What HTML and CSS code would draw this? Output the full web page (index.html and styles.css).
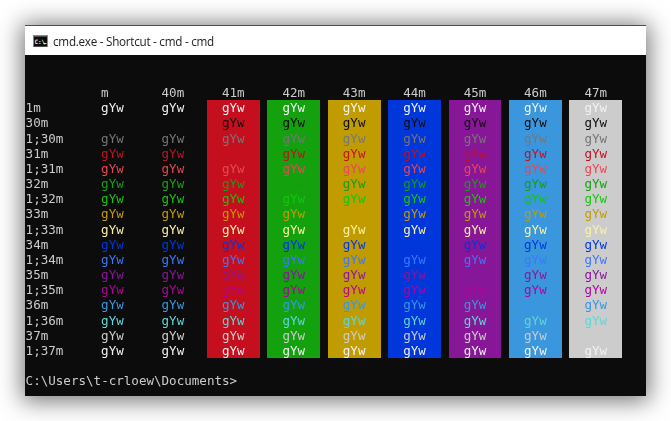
FILE: index.html
```html
<!DOCTYPE html>
<html lang="en">
<head>
<meta charset="utf-8">
<title>cmd.exe - Shortcut - cmd - cmd</title>
<link rel="stylesheet" href="styles.css">
</head>
<body>
<main class="window">
  <header class="titlebar">
    <svg class="app-icon" width="15" height="12" viewBox="0 0 15 12" aria-hidden="true">
      <rect width="15" height="12" fill="#8a8a8a"/>
      <rect x="1" y="1.5" width="13" height="10" fill="#0c0c0c"/>
      <text x="1.4" y="9" class="app-icon-text">C:\</text>
      <rect x="10.5" y="8" width="3" height="1" fill="#e8e8e8"/>
    </svg>
    <span class="title">cmd.exe - Shortcut - cmd - cmd</span>
  </header>
  <section class="term">
    <div class="line"></div>
    <div class="line"></div>
    <div class="row head"><span></span><span class="c">m</span><span class="c">40m</span><span class="c">41m</span><span class="c">42m</span><span class="c">43m</span><span class="c">44m</span><span class="c">45m</span><span class="c">46m</span><span class="c">47m</span></div>
    <div class="row f-bwhite"><span class="l">1m</span><span class="c">gYw</span><span class="c">gYw</span><span class="c b1">gYw</span><span class="c b2">gYw</span><span class="c b3">gYw</span><span class="c b4">gYw</span><span class="c b5">gYw</span><span class="c b6">gYw</span><span class="c b7">gYw</span></div>
    <div class="row f-black"><span class="l">30m</span><span class="c">gYw</span><span class="c">gYw</span><span class="c b1">gYw</span><span class="c b2">gYw</span><span class="c b3">gYw</span><span class="c b4">gYw</span><span class="c b5">gYw</span><span class="c b6">gYw</span><span class="c b7">gYw</span></div>
    <div class="row f-bblack"><span class="l">1;30m</span><span class="c">gYw</span><span class="c">gYw</span><span class="c b1">gYw</span><span class="c b2">gYw</span><span class="c b3">gYw</span><span class="c b4">gYw</span><span class="c b5">gYw</span><span class="c b6">gYw</span><span class="c b7">gYw</span></div>
    <div class="row f-red"><span class="l">31m</span><span class="c">gYw</span><span class="c">gYw</span><span class="c b1">gYw</span><span class="c b2">gYw</span><span class="c b3">gYw</span><span class="c b4">gYw</span><span class="c b5">gYw</span><span class="c b6">gYw</span><span class="c b7">gYw</span></div>
    <div class="row f-bred"><span class="l">1;31m</span><span class="c">gYw</span><span class="c">gYw</span><span class="c b1">gYw</span><span class="c b2">gYw</span><span class="c b3">gYw</span><span class="c b4">gYw</span><span class="c b5">gYw</span><span class="c b6">gYw</span><span class="c b7">gYw</span></div>
    <div class="row f-green"><span class="l">32m</span><span class="c">gYw</span><span class="c">gYw</span><span class="c b1">gYw</span><span class="c b2">gYw</span><span class="c b3">gYw</span><span class="c b4">gYw</span><span class="c b5">gYw</span><span class="c b6">gYw</span><span class="c b7">gYw</span></div>
    <div class="row f-bgreen"><span class="l">1;32m</span><span class="c">gYw</span><span class="c">gYw</span><span class="c b1">gYw</span><span class="c b2">gYw</span><span class="c b3">gYw</span><span class="c b4">gYw</span><span class="c b5">gYw</span><span class="c b6">gYw</span><span class="c b7">gYw</span></div>
    <div class="row f-yellow"><span class="l">33m</span><span class="c">gYw</span><span class="c">gYw</span><span class="c b1">gYw</span><span class="c b2">gYw</span><span class="c b3">gYw</span><span class="c b4">gYw</span><span class="c b5">gYw</span><span class="c b6">gYw</span><span class="c b7">gYw</span></div>
    <div class="row f-byellow"><span class="l">1;33m</span><span class="c">gYw</span><span class="c">gYw</span><span class="c b1">gYw</span><span class="c b2">gYw</span><span class="c b3">gYw</span><span class="c b4">gYw</span><span class="c b5">gYw</span><span class="c b6">gYw</span><span class="c b7">gYw</span></div>
    <div class="row f-blue"><span class="l">34m</span><span class="c">gYw</span><span class="c">gYw</span><span class="c b1">gYw</span><span class="c b2">gYw</span><span class="c b3">gYw</span><span class="c b4">gYw</span><span class="c b5">gYw</span><span class="c b6">gYw</span><span class="c b7">gYw</span></div>
    <div class="row f-bblue"><span class="l">1;34m</span><span class="c">gYw</span><span class="c">gYw</span><span class="c b1">gYw</span><span class="c b2">gYw</span><span class="c b3">gYw</span><span class="c b4">gYw</span><span class="c b5">gYw</span><span class="c b6">gYw</span><span class="c b7">gYw</span></div>
    <div class="row f-magenta"><span class="l">35m</span><span class="c">gYw</span><span class="c">gYw</span><span class="c b1">gYw</span><span class="c b2">gYw</span><span class="c b3">gYw</span><span class="c b4">gYw</span><span class="c b5">gYw</span><span class="c b6">gYw</span><span class="c b7">gYw</span></div>
    <div class="row f-bmagenta"><span class="l">1;35m</span><span class="c">gYw</span><span class="c">gYw</span><span class="c b1">gYw</span><span class="c b2">gYw</span><span class="c b3">gYw</span><span class="c b4">gYw</span><span class="c b5">gYw</span><span class="c b6">gYw</span><span class="c b7">gYw</span></div>
    <div class="row f-cyan"><span class="l">36m</span><span class="c">gYw</span><span class="c">gYw</span><span class="c b1">gYw</span><span class="c b2">gYw</span><span class="c b3">gYw</span><span class="c b4">gYw</span><span class="c b5">gYw</span><span class="c b6">gYw</span><span class="c b7">gYw</span></div>
    <div class="row f-bcyan"><span class="l">1;36m</span><span class="c">gYw</span><span class="c">gYw</span><span class="c b1">gYw</span><span class="c b2">gYw</span><span class="c b3">gYw</span><span class="c b4">gYw</span><span class="c b5">gYw</span><span class="c b6">gYw</span><span class="c b7">gYw</span></div>
    <div class="row f-white"><span class="l">37m</span><span class="c">gYw</span><span class="c">gYw</span><span class="c b1">gYw</span><span class="c b2">gYw</span><span class="c b3">gYw</span><span class="c b4">gYw</span><span class="c b5">gYw</span><span class="c b6">gYw</span><span class="c b7">gYw</span></div>
    <div class="row f-bwhite"><span class="l">1;37m</span><span class="c">gYw</span><span class="c">gYw</span><span class="c b1">gYw</span><span class="c b2">gYw</span><span class="c b3">gYw</span><span class="c b4">gYw</span><span class="c b5">gYw</span><span class="c b6">gYw</span><span class="c b7">gYw</span></div>
    <div class="line"></div>
    <div class="line prompt">C:\Users\t-crloew\Documents&gt;</div>
  </section>
</main>
</body>
</html>
```

FILE: styles.css
```css
html, body {
  margin: 0;
  padding: 0;
  background: #fff;
}

body {
  width: 671px;
  height: 421px;
  padding: 25px;
  box-sizing: border-box;
  overflow: hidden;
}

.window {
  width: 621px;
  height: 371px;
  display: flex;
  flex-direction: column;
  box-shadow: 0 2px 22px 3px rgba(0, 0, 0, 0.55);
}

.titlebar {
  height: 30px;
  flex: none;
  box-sizing: border-box;
  border-top: 1px solid #0f5f8f;
  background: #fff;
  display: flex;
  align-items: center;
  gap: 5px;
  padding-left: 8px;
  padding-top: 1px;
}

.app-icon { flex: none; }

.app-icon-text {
  font: bold 6px "DejaVu Sans Mono", monospace;
  fill: #f0f0f0;
}

.title {
  font: 11.7px/16px "Open Sans", "Noto Sans", sans-serif;
  color: #222;
  letter-spacing: -0.27px;
  filter: blur(0.25px);
}

.term {
  flex: 1;
  background: #0c0c0c;
  color: #cccccc;
  font-family: "DejaVu Sans Mono", monospace;
  font-size: 12.56px;
  line-height: 15px;
  padding-left: 0.6px;
  filter: blur(0.35px);
}

.line { height: 15px; }

.prompt { color: #cccccc; }

.row {
  display: grid;
  grid-template-columns: repeat(10, 7ch);
  column-gap: 1ch;
  height: 15.18px;
}

.l { color: #cccccc; }

.c { padding-left: 2ch; }

.b1 { background: #c50f1f; }
.b2 { background: #13a10e; }
.b3 { background: #c19c00; }
.b4 { background: #0037da; }
.b5 { background: #881798; }
.b6 { background: #3a96dd; }
.b7 { background: #cccccc; }

.f-black { color: #0c0c0c; }
.f-bblack { color: #767676; }
.f-red { color: #c50f1f; }
.f-bred { color: #e74856; }
.f-green { color: #13a10e; }
.f-bgreen { color: #16c60c; }
.f-yellow { color: #c19c00; }
.f-byellow { color: #f9f1a5; }
.f-blue { color: #0037da; }
.f-bblue { color: #3b78ff; }
.f-magenta { color: #881798; }
.f-bmagenta { color: #b4009e; }
.f-cyan { color: #3a96dd; }
.f-bcyan { color: #61d6d6; }
.f-white { color: #cccccc; }
.f-bwhite { color: #f2f2f2; }
```
